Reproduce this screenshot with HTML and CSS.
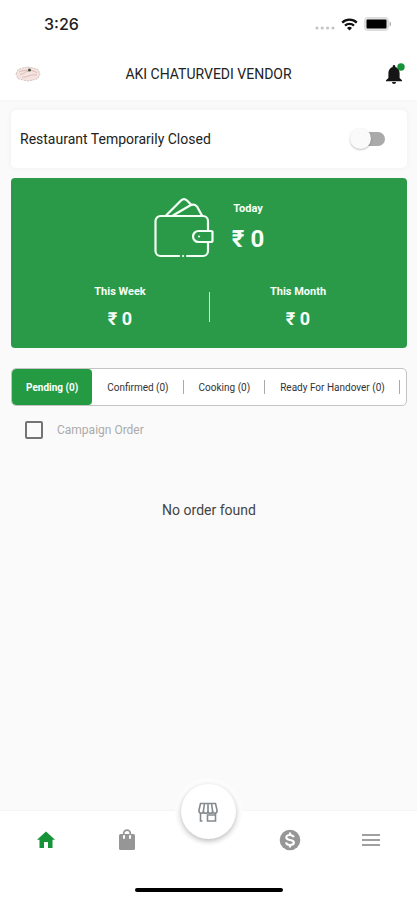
FILE: index.html
```html
<!DOCTYPE html>
<html lang="en">
<head>
<meta charset="utf-8">
<meta name="viewport" content="width=device-width, initial-scale=1">
<title>Vendor dashboard</title>
<link rel="stylesheet" href="styles.css">
</head>
<body>
<div class="top">
  <div class="status">
    <span class="time">3:26</span>
    <span class="signals">
      <svg width="20" height="4" viewBox="0 0 20 4" fill="#c4c4c4"><circle cx="2" cy="2" r="1.6"/><circle cx="7.2" cy="2" r="1.6"/><circle cx="12.6" cy="2" r="1.6"/><circle cx="18" cy="2" r="1.6"/></svg>
      <svg width="17" height="13" viewBox="0 0 17 13" fill="none" stroke="#111" stroke-width="2.3"><path d="M1.2 4.6a10.6 10.6 0 0 1 14.6 0M4 7.700a6.500 6.500 0 0 1 9 0"/><path d="M8.500 12.400 6 9.900a3.600 3.600 0 0 1 5 0z" fill="#111" stroke="none"/></svg>
      <svg width="28" height="14" viewBox="0 0 28 14"><rect x=".6" y=".6" width="23.8" height="12.8" rx="3" fill="#e4e4e4" stroke="#d8d8d8"/><rect x="2.500" y="2.500" width="20" height="9" rx="1" fill="#000"/><path d="M25.600 4.500a2.800 2.800 0 0 1 0 5z" fill="#aaa"/></svg>
    </span>
  </div>
  <header class="header">
    <svg class="logo" width="26" height="16" viewBox="0 0 26 16"><path d="M1 8 3 3.500 8 2l5-1 5 1 5 1.500L25 8l-2 4.500-5 1.500-5 1-5-1-5-1.500z" fill="#f5e3df" stroke="#cfc5c0" stroke-width="1" stroke-dasharray="2 1"/><path d="M5 8.500c4 0 5-3.500 9-3.500M7 11c5 1 7-3 15-2M4 6c4-2 14-3 18 1" fill="none" stroke="#d3b3ac" stroke-width=".8"/><circle cx="14.500" cy="4" r="1.500" fill="#444f3c"/></svg>
    <h1>AKI CHATURVEDI VENDOR</h1>
    <button class="bell" aria-label="Notifications">
      <svg width="20" height="22" viewBox="0 0 20 22"><path d="M9 2a1.300 1.300 0 0 1 1.300 1.300V4C13 4.700 14.600 7 14.600 10v5l2.400 2.300v.9H1v-.9L3.400 15v-5c0-3 1.600-5.300 4.300-6v-.7A1.300 1.300 0 0 1 9 2zM7 19h4a2 2 0 0 1-4 0z" fill="#151515"/><circle cx="16" cy="4" r="3.700" fill="#169239"/></svg>
    </button>
  </header>
</div>
<main class="main">
  <label class="closed"><span>Restaurant Temporarily Closed</span><input type="checkbox" role="switch" class="switch"></label>
  <section class="earnings">
    <div class="today">
      <svg width="60" height="62" viewBox="0 0 60 62" fill="none" stroke="#f4fff5" stroke-width="2.200" stroke-linecap="round" stroke-linejoin="round"><path d="M25 59H6.500A5 5 0 0 1 1.500 54V24a5 5 0 0 1 5-5H49a5 5 0 0 1 5 5v9M54 45v9a5 5 0 0 1-5 5H33M29 59h.1"/><path d="M12 18.500 27 3.500q3-3 6 0L37 7.500M19 18.500 36 8.500q4-2 7 1l5 9"/><path d="M58.500 34.500v9q0 1.500-1.500 1.500H44.500a5.500 5.500 0 0 1 0-11H57q1.500 0 1.500 1.500z"/><path d="M45 39.500h.1"/></svg>
      <div><h2>Today</h2><p class="big">₹ 0</p></div>
    </div>
    <div class="periods">
      <div><h2>This Week</h2><p>₹ 0</p></div>
      <div><h2>This Month</h2><p>₹ 0</p></div>
    </div>
  </section>
  <div class="tabs" role="tablist">
    <button role="tab" aria-selected="true" class="tab active">Pending (0)</button>
    <button role="tab" class="tab">Confirmed (0)</button>
    <button role="tab" class="tab">Cooking (0)</button>
    <button role="tab" class="tab">Ready For Handover (0)</button>
  </div>
  <label class="campaign"><input type="checkbox"><span>Campaign Order</span></label>
  <p class="empty">No order found</p>
</main>
<footer class="bottom">
  <nav class="nav">
    <a href="#home" aria-label="Home"><svg width="20" height="20" viewBox="0 0 20 20" fill="#169239"><path d="M10 1.500 19 9.800h-2.500V18H12v-6H8v6H3.500V9.800H1z"/></svg></a>
    <a href="#orders" aria-label="Orders"><svg width="20" height="22" viewBox="0 0 20 22"><path d="M6.700 6V4.500a3.300 3.300 0 0 1 6.600 0V6" fill="none" stroke="#969696" stroke-width="1.700"/><rect x="2" y="5" width="16" height="16" rx="1.500" fill="#969696"/><path d="M7 7v2M13 7v2" stroke="#fff" stroke-width="2" stroke-linecap="round"/></svg></a>
    <a href="#store" class="fab" aria-label="Restaurant"><svg width="20" height="20" viewBox="0 0 20 20" fill="none" stroke="#858a8f" stroke-width="1.600"><path d="M2.500 1.500h15L19 8v1a2.200 2.200 0 0 1-4.400 0 2.300 2.300 0 0 1-4.600 0 2.300 2.300 0 0 1-4.600 0A2.200 2.200 0 0 1 1 9V8z"/><path d="M6.500 1.500 5.400 9M10 1.500V9M13.500 1.500 14.600 9"/><path d="M2.500 11v8H4.500M17.500 11v8h-8v-6h8" /></svg></a>
    <a href="#wallet" aria-label="Wallet"><svg width="22" height="22" viewBox="0 0 22 22"><circle cx="11" cy="11" r="10.300" fill="#969696"/><path d="M14.800 8.300C14.300 6.600 12.900 6 11 6 8.800 6 7.300 6.900 7.300 8.500c0 3.400 7.600 1.500 7.600 5 0 1.600-1.600 2.500-3.900 2.500-2.200 0-3.700-.9-4-2.700M11 3.500V6M11 16v2.500" fill="none" stroke="#fff" stroke-width="2.100"/></svg></a>
    <a href="#menu" aria-label="Menu"><svg width="20" height="14" viewBox="0 0 20 14" fill="#a0a0a0"><path d="M1 1h18v2H1zM1 6h18v2H1zM1 11h18v2H1z"/></svg></a>
  </nav>
  <div class="home-bar"></div>
</footer>
</body>
</html>
```
FILE: styles.css
```css
* { box-sizing: border-box; }
body {
  margin: 0;
  min-height: 100vh;
  display: flex;
  flex-direction: column;
  background: #fafafa;
  color: #222;
  font-family: Roboto, "Noto Sans", sans-serif;
}
h1, h2, p { margin: 0; }
button { border: 0; padding: 0; background: none; font: inherit; color: inherit; }
svg { display: block; }

.top { background: #fff; box-shadow: 0 1px 2px rgba(0, 0, 0, 0.02); }
.status {
  height: 48px;
  padding: 0 25px 0 44px;
  display: flex;
  align-items: center;
  justify-content: space-between;
}
.time { font: 500 16px/20px Inter, sans-serif; color: #222; }
.signals { display: flex; align-items: center; gap: 6px; }
.signals svg:first-child { margin-top: 8px; }
.header {
  height: 52px;
  padding: 0 12px 0 15px;
  display: grid;
  grid-template-columns: 28px 1fr 31px;
  align-items: center;
}
.header h1 { font-size: 14px; line-height: 16px; font-weight: 400; text-align: center; }
.bell { justify-self: end; }

.main { flex: 1; padding: 10px 10px 0 11px; }
.closed {
  height: 58px;
  padding: 0 22px 0 9px;
  display: flex;
  align-items: center;
  justify-content: space-between;
  background: #fff;
  border-radius: 5px;
  box-shadow: 0 0 6px rgba(0, 0, 0, 0.05);
  font-size: 14px;
}
.switch {
  appearance: none;
  position: relative;
  width: 35px;
  height: 14px;
  margin: 0;
  border-radius: 7px;
  background: linear-gradient(#aaa, #aaa) right / 26px 100% no-repeat;
}
.switch::before {
  content: "";
  position: absolute;
  left: 0;
  top: -4px;
  width: 21px;
  height: 21px;
  border-radius: 50%;
  background: #fafafa;
  box-shadow: 0 1px 2px rgba(0, 0, 0, 0.25);
}

.earnings {
  margin-top: 10px;
  height: 170px;
  padding-top: 19px;
  border-radius: 4px;
  background: #2b9a48;
  color: #f6fff7;
  text-align: center;
}
.earnings h2 { font-size: 11px; line-height: 14px; font-weight: 700; }
.earnings p { margin-top: 10px; font-size: 18px; line-height: 20px; font-weight: 700; }
.earnings p.big { margin-top: 8px; font-size: 24px; line-height: 30px; }
.today { display: flex; justify-content: center; align-items: center; gap: 18px; }
.periods { margin-top: 26px; display: grid; grid-template-columns: 1fr 1fr; padding: 0 20px; }
.periods div + div {
  background: linear-gradient(#d3ebd7, #d3ebd7) left center / 1px 30px no-repeat;
}

.tabs {
  margin-top: 20px;
  height: 38px;
  display: flex;
  overflow: hidden;
  border: 1px solid #c4c4c4;
  border-radius: 5px;
  background: #fff;
}
.tab {
  flex: none;
  padding: 0 15px;
  font-size: 10px;
  color: #333;
  background: linear-gradient(#aaa, #aaa) right center / 1px 14px no-repeat;
}
.tab.active { padding: 0 14px; background: #249a42; color: #fff; border-radius: 4px; font-weight: 700; }

.campaign {
  height: 48px;
  padding-left: 14px;
  display: flex;
  align-items: center;
  gap: 14px;
  font-size: 12px;
  color: #aaa;
}
.campaign input {
  appearance: none;
  width: 18px;
  height: 18px;
  margin: 0;
  border: 2px solid #747474;
  border-radius: 2px;
}
.empty { margin-top: 48px; text-align: center; font-size: 14px; line-height: 16px; color: #444; }

.bottom { background: #fff; box-shadow: 0 -1px 1px rgba(0, 0, 0, 0.02); padding-bottom: 8px; }
.nav { height: 57px; padding: 0 5px; display: grid; grid-template-columns: repeat(5, 1fr); }
.nav a { display: flex; align-items: center; justify-content: center; }
.nav .fab {
  width: 55px;
  height: 55px;
  margin-top: -27px;
  justify-self: center;
  border-radius: 50%;
  background: #fff;
  box-shadow: 0 2px 5px rgba(0, 0, 0, 0.25), 0 0 0 6px #fcfcfc;
}
.home-bar { width: 148px; height: 4px; margin: 20px auto 0; border-radius: 2px; background: #000; }
```
